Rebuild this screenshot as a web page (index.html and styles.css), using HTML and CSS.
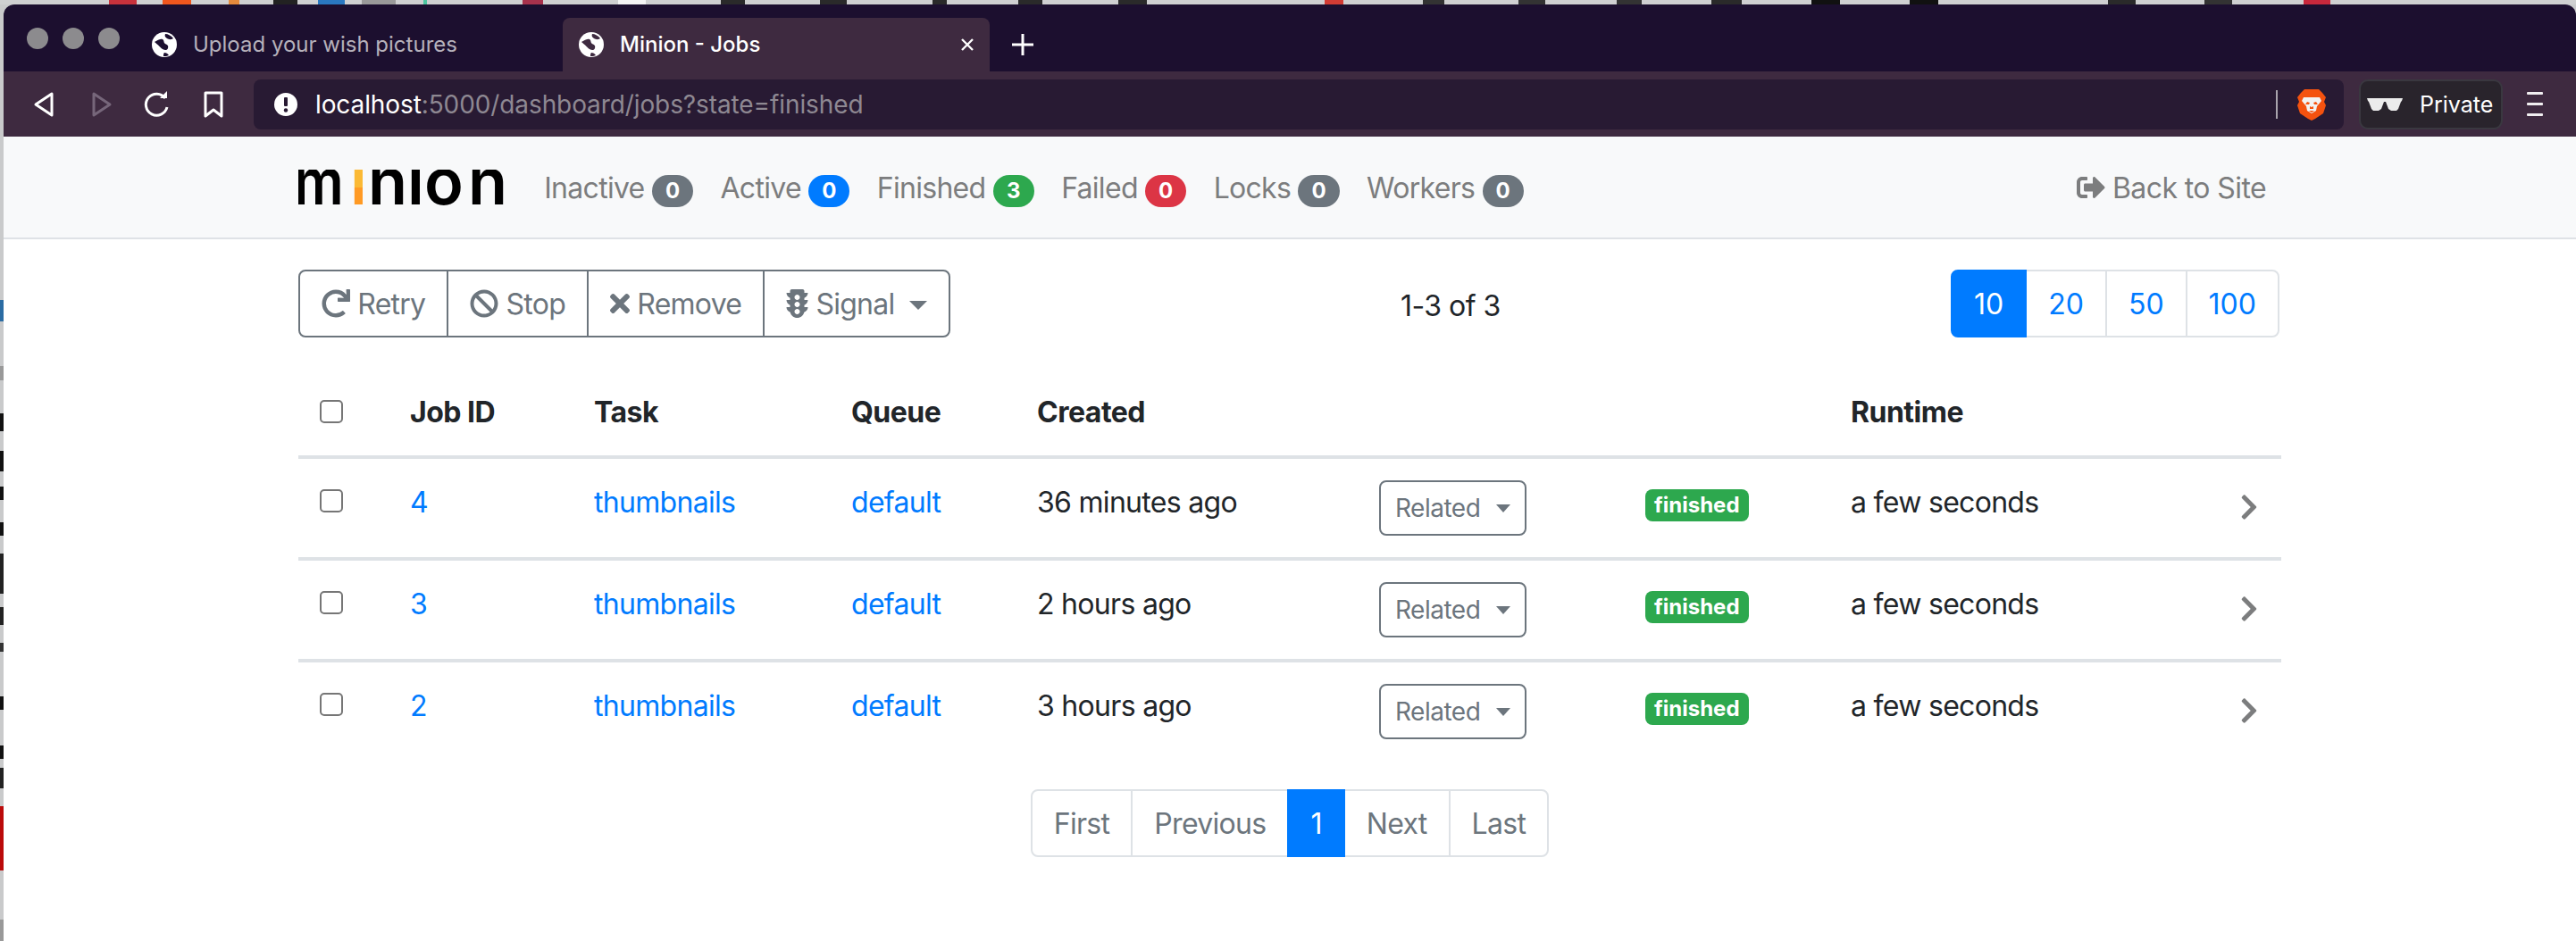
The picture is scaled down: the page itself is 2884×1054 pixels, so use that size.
FILE: index.html
```html
<!DOCTYPE html>
<html lang="en">
<head>
  <meta charset="UTF-8">
  <title>Minion - Jobs</title>
  <link rel="stylesheet" href="styles.css">
</head>
<body>
  <div class="desk-top"></div>
  <div class="screen">
    <div class="desk-left"></div>
    <div class="window">
      <!-- browser tabs -->
      <div class="tabstrip">
        <div class="lights"><i></i><i></i><i></i></div>
        <div class="tab">
          <svg class="globe" viewBox="0 0 28 28"><circle cx="14" cy="14" r="14" fill="#fff"/><path d="M3 11c3-1 5-4 9-3 2 1 1 4 3 5s4 2 3 5-4 2-6 1-5-5-9-8zM15 2c3 0 7 2 9 5-3 2-5 1-7 0s-3-3-2-5zM14 23c2 0 4 1 5 3-2 1-4 1-6 1 0-2 0-3 1-4z" fill="#1c0f2f"/></svg>
          <span>Upload your wish pictures</span>
        </div>
        <div class="tab active">
          <svg class="globe" viewBox="0 0 28 28"><circle cx="14" cy="14" r="14" fill="#fff"/><path d="M3 11c3-1 5-4 9-3 2 1 1 4 3 5s4 2 3 5-4 2-6 1-5-5-9-8zM15 2c3 0 7 2 9 5-3 2-5 1-7 0s-3-3-2-5zM14 23c2 0 4 1 5 3-2 1-4 1-6 1 0-2 0-3 1-4z" fill="#3e2a40"/></svg>
          <span>Minion - Jobs</span>
          <svg class="tab-close" viewBox="0 0 16 16"><path d="M2 2l12 12M14 2L2 14" stroke="#fff" stroke-width="2.4"/></svg>
        </div>
        <svg class="tab-new" viewBox="0 0 24 24"><path d="M12 0v24M0 12h24" stroke="#fff" stroke-width="3"/></svg>
      </div>

      <!-- browser toolbar -->
      <div class="toolbar">
        <svg class="tool" viewBox="0 0 32 32"><path d="M6 16L24 4v24z" fill="none" stroke="#fff" stroke-width="3" stroke-linejoin="round"/></svg>
        <svg class="tool" viewBox="0 0 32 32"><path d="M26 16L8 4v24z" fill="none" stroke="#76667a" stroke-width="3" stroke-linejoin="round"/></svg>
        <svg class="tool" viewBox="0 0 32 32"><path d="M25 9a12 12 0 1 0 2 10" fill="none" stroke="#fff" stroke-width="3"/><path d="M19 9h8V1z" fill="#fff"/></svg>
        <svg class="tool" viewBox="0 0 32 32"><path d="M7 3h18v26l-9-7-9 7z" fill="none" stroke="#fff" stroke-width="3" stroke-linejoin="round"/></svg>
        <div class="urlbar">
          <svg class="url-info" viewBox="0 0 26 26"><circle cx="13" cy="13" r="13" fill="#fff"/><rect x="11" y="5" width="4" height="10" rx="1" fill="#281a33"/><circle cx="13" cy="19.5" r="2.2" fill="#281a33"/></svg>
          <div class="url-text">localhost<span>:5000/dashboard/jobs?state=finished</span></div>
          <div class="url-sep"></div>
          <svg class="lion" viewBox="0 0 32 36"><path d="M8 1h16l4 4 4 5-2 5 2 4-3 9-9 6-4 2-4-2-9-6-3-9 2-4-2-5 4-5z" fill="#f4520f"/><path d="M7 10h18l2 4-5 6-1 5-5 3-5-3-1-5-5-6z" fill="#f2f2f2"/><path d="M13 18h-4l2-3 3 1zM19 18h4l-2-3-3 1zM13 25h6l-3 2zM14 20v3h4v-3l-2 1z" fill="#f4520f"/></svg>
        </div>
        <div class="private">
          <svg class="shades" viewBox="0 0 40 14"><path d="M0 0h40l-1 3-1 1-3 8-2 2h-6l-3-2-3-8h-2l-3 8-3 2H7l-2-2-3-8-1-1z" fill="#ececec"/></svg>
          <span>Private</span>
        </div>
        <div class="burger"><i></i><i></i><i></i></div>
      </div>

      <nav class="navbar">
        <div class="container nav-row">
          <svg class="logo" viewBox="0 0 232 48">
            <defs>
              <clipPath id="logo-clip"><rect x="0" y="4" width="232" height="40"/></clipPath>
              <linearGradient id="logo-i" gradientUnits="userSpaceOnUse" x1="0" y1="4" x2="0" y2="44">
                <stop offset=".5" stop-color="#fbb934"/><stop offset=".5" stop-color="#ff9a24"/>
              </linearGradient>
            </defs>
            <g clip-path="url(#logo-clip)" class="logo-text">
              <text transform="translate(-5 43) scale(.86 1)">m</text>
              <text y="43" x="58 78 122 141 190"><tspan fill="url(#logo-i)">i</tspan>nion</text>
            </g>
          </svg>
          <a class="nav-link">Inactive <span class="badge grey">0</span></a>
          <a class="nav-link">Active <span class="badge blue">0</span></a>
          <a class="nav-link">Finished <span class="badge green">3</span></a>
          <a class="nav-link">Failed <span class="badge red">0</span></a>
          <a class="nav-link">Locks <span class="badge grey">0</span></a>
          <a class="nav-link">Workers <span class="badge grey">0</span></a>
          <a class="nav-link back">
            <svg class="ico" viewBox="0 0 512 512"><path d="M497 273L329 441c-15 15-41 4.500-41-17v-96H152c-13.300 0-24-10.700-24-24v-96c0-13.300 10.700-24 24-24h136V88c0-21.400 25.900-32 41-17l168 168c9.300 9.400 9.300 24.600 0 34zM192 436v-40c0-6.600-5.400-12-12-12H96c-17.700 0-32-14.300-32-32V160c0-17.700 14.300-32 32-32h84c6.600 0 12-5.400 12-12V76c0-6.600-5.400-12-12-12H96c-53 0-96 43-96 96v192c0 53 43 96 96 96h84c6.600 0 12-5.400 12-12z"/></svg>
            Back to Site
          </a>
        </div>
      </nav>

      <main class="container">
        <div class="actions">
          <div class="btn-group">
            <button class="btn">
              <svg class="ico" viewBox="0 0 512 512"><path d="M500.330 0h-47.410a12 12 0 0 0-12 12.570l4 82.760A247.420 247.420 0 0 0 256 8C119.340 8 8.900 119.530 8 256.190 7.100 393.070 118.100 504 256 504a247.100 247.100 0 0 0 166.180-63.910 12 12 0 0 0 .48-17.430l-34-34a12 12 0 0 0-16.380-.55A176 176 0 1 1 402.100 157.800l-101.530-4.870a12 12 0 0 0-12.570 12v47.410a12 12 0 0 0 12 12h200.330a12 12 0 0 0 12-12V12a12 12 0 0 0-12-12z"/></svg>
              Retry
            </button>
            <button class="btn">
              <svg class="ico" viewBox="0 0 512 512"><path d="M256 8C119.034 8 8 119.033 8 256s111.034 248 248 248 248-111.034 248-248S392.967 8 256 8zm130.108 117.892c65.448 65.448 70 165.481 20.677 235.637L150.470 105.216c70.204-49.356 170.226-44.735 235.638 20.676zM125.892 386.108c-65.448-65.448-70-165.481-20.677-235.637L361.530 406.784c-70.203 49.356-170.226 44.736-235.638-20.676z"/></svg>
              Stop
            </button>
            <button class="btn">
              <svg class="ico ico-x" viewBox="0 0 352 512"><path d="M242.720 256l100.070-100.070c12.280-12.280 12.280-32.190 0-44.480l-22.240-22.240c-12.280-12.280-32.190-12.280-44.480 0L176 189.280 75.930 89.210c-12.280-12.280-32.190-12.280-44.480 0L9.210 111.450c-12.280 12.280-12.280 32.190 0 44.480L109.280 256 9.210 356.070c-12.280 12.280-12.280 32.190 0 44.480l22.240 22.240c12.280 12.280 32.200 12.280 44.480 0L176 322.720l100.070 100.070c12.280 12.280 32.200 12.280 44.480 0l22.240-22.240c12.280-12.280 12.280-32.190 0-44.480L242.720 256z"/></svg>
              Remove
            </button>
            <button class="btn">
              <svg class="ico ico-light" viewBox="0 0 384 512"><path d="M384 192h-64v-37.880c37.200-13.220 64-48.380 64-90.120h-64V32c0-17.670-14.330-32-32-32H96C78.330 0 64 14.330 64 32v32H0c0 41.740 26.800 76.900 64 90.120V192H0c0 41.740 26.800 76.900 64 90.120V320H0c0 42.840 28.250 78.690 66.990 91.050C79.420 468.720 130.600 512 192 512s112.580-43.280 125.010-100.950C355.750 398.690 384 362.840 384 320h-64v-37.880c37.200-13.220 64-48.380 64-90.120zM192 448c-26.510 0-48-21.490-48-48s21.490-48 48-48 48 21.490 48 48-21.490 48-48 48zm0-128c-26.510 0-48-21.490-48-48s21.490-48 48-48 48 21.490 48 48-21.490 48-48 48zm0-128c-26.510 0-48-21.490-48-48 0-26.510 21.490-48 48-48s48 21.490 48 48c0 26.510-21.490 48-48 48z"/></svg>
              Signal <span class="caret"></span>
            </button>
          </div>
          <div class="count">1-3 of 3</div>
          <div class="pager page-sizes">
            <a class="page on">10</a>
            <a class="page link">20</a>
            <a class="page link">50</a>
            <a class="page link">100</a>
          </div>
        </div>

        <table class="jobs">
          <colgroup>
            <col class="c-check"><col class="c-id"><col class="c-task"><col class="c-queue">
            <col class="c-created"><col class="c-related"><col class="c-state"><col class="c-runtime"><col class="c-more">
          </colgroup>
          <thead>
            <tr>
              <th><input type="checkbox" class="check"></th>
              <th>Job ID</th>
              <th>Task</th>
              <th>Queue</th>
              <th>Created</th>
              <th></th>
              <th></th>
              <th>Runtime</th>
              <th></th>
            </tr>
          </thead>
          <tbody>
            <tr>
              <td><input type="checkbox" class="check"></td>
              <td><a>4</a></td>
              <td><a>thumbnails</a></td>
              <td><a>default</a></td>
              <td>36 minutes ago</td>
              <td><button class="btn btn-sm">Related <span class="caret"></span></button></td>
              <td><span class="state">finished</span></td>
              <td>a few seconds</td>
              <td class="more"><svg class="chevron" viewBox="0 0 320 512"><path d="M285.476 272.971L91.132 467.314c-9.373 9.373-24.569 9.373-33.941 0l-22.667-22.667c-9.357-9.357-9.375-24.522-.04-33.901L188.505 256 34.484 101.255c-9.335-9.379-9.317-24.544.04-33.901l22.667-22.667c9.373-9.373 24.569-9.373 33.941 0L285.475 239.030c9.373 9.372 9.373 24.568.001 33.941z"/></svg></td>
            </tr>
            <tr>
              <td><input type="checkbox" class="check"></td>
              <td><a>3</a></td>
              <td><a>thumbnails</a></td>
              <td><a>default</a></td>
              <td>2 hours ago</td>
              <td><button class="btn btn-sm">Related <span class="caret"></span></button></td>
              <td><span class="state">finished</span></td>
              <td>a few seconds</td>
              <td class="more"><svg class="chevron" viewBox="0 0 320 512"><path d="M285.476 272.971L91.132 467.314c-9.373 9.373-24.569 9.373-33.941 0l-22.667-22.667c-9.357-9.357-9.375-24.522-.04-33.901L188.505 256 34.484 101.255c-9.335-9.379-9.317-24.544.04-33.901l22.667-22.667c9.373-9.373 24.569-9.373 33.941 0L285.475 239.030c9.373 9.372 9.373 24.568.001 33.941z"/></svg></td>
            </tr>
            <tr>
              <td><input type="checkbox" class="check"></td>
              <td><a>2</a></td>
              <td><a>thumbnails</a></td>
              <td><a>default</a></td>
              <td>3 hours ago</td>
              <td><button class="btn btn-sm">Related <span class="caret"></span></button></td>
              <td><span class="state">finished</span></td>
              <td>a few seconds</td>
              <td class="more"><svg class="chevron" viewBox="0 0 320 512"><path d="M285.476 272.971L91.132 467.314c-9.373 9.373-24.569 9.373-33.941 0l-22.667-22.667c-9.357-9.357-9.375-24.522-.04-33.901L188.505 256 34.484 101.255c-9.335-9.379-9.317-24.544.04-33.901l22.667-22.667c9.373-9.373 24.569-9.373 33.941 0L285.475 239.030c9.373 9.372 9.373 24.568.001 33.941z"/></svg></td>
            </tr>
          </tbody>
        </table>

        <div class="pagination">
          <div class="pager">
            <a class="page">First</a>
            <a class="page">Previous</a>
            <a class="page on">1</a>
            <a class="page">Next</a>
            <a class="page">Last</a>
          </div>
        </div>
      </main>
    </div>
  </div>
</body>
</html>
```

FILE: styles.css
```css
* {
  box-sizing: border-box;
}
html, body {
  height: 100%;
}
body {
  margin: 0;
  display: flex;
  flex-direction: column;
  overflow: hidden;
  background: #c9cacb;
  color: #212529;
  font-family: Inter, "Liberation Sans", sans-serif;
  font-size: 32px;
  line-height: 48px;
  letter-spacing: -0.5px;
}

/* bits of the desktop showing behind the window */
.desk-top {
  height: 5px;
  flex: none;
  background:
    linear-gradient(90deg,
      #cfd0d1 122px, #c8323c 122px, #c8323c 153px, #cfd0d1 153px,
      #cfd0d1 182px, #f0561d 182px, #f0561d 214px, #cfd0d1 214px,
      #cfd0d1 256px, #e58a3c 256px, #e58a3c 268px, #cfd0d1 268px,
      #cfd0d1 306px, #222 306px, #222 333px, #cfd0d1 333px,
      #cfd0d1 356px, #2a78c0 356px, #2a78c0 386px, #cfd0d1 386px,
      #cfd0d1 405px, #999 405px, #999 443px, #cfd0d1 443px,
      #cfd0d1 474px, #4cc6a0 474px, #4cc6a0 478px, #cfd0d1 478px,
      #cfd0d1 585px, #a8324c 585px, #a8324c 608px, #cfd0d1 608px,
      #cfd0d1 692px, #f4f4f4 692px, #f4f4f4 723px, #cfd0d1 723px,
      #cfd0d1 807px, #2a2a2a 807px, #2a2a2a 834px, #cfd0d1 834px,
      #cfd0d1 918px, #2a2a2a 918px, #2a2a2a 948px, #cfd0d1 948px,
      #cfd0d1 1044px, #2a2a2a 1044px, #2a2a2a 1060px, #cfd0d1 1060px,
      #cfd0d1 1140px, #2a2a2a 1140px, #2a2a2a 1167px, #cfd0d1 1167px,
      #cfd0d1 1252px, #2a2a2a 1252px, #2a2a2a 1284px, #cfd0d1 1284px,
      #cfd0d1 1483px, #d23c34 1483px, #d23c34 1504px, #cfd0d1 1504px,
      #cfd0d1 1593px, #333 1593px, #333 1617px, #cfd0d1 1617px,
      #cfd0d1 1700px, #333 1700px, #333 1730px, #cfd0d1 1730px,
      #cfd0d1 1810px, #333 1810px, #333 1838px, #cfd0d1 1838px,
      #cfd0d1 1916px, #2a2a2a 1916px, #2a2a2a 1950px, #cfd0d1 1950px,
      #cfd0d1 2028px, #111 2028px, #111 2060px, #cfd0d1 2060px,
      #cfd0d1 2138px, #111 2138px, #111 2170px, #cfd0d1 2170px,
      #cfd0d1 2360px, #2a2a2a 2360px, #2a2a2a 2391px, #cfd0d1 2391px,
      #cfd0d1 2468px, #333 2468px, #333 2499px, #cfd0d1 2499px,
      #cfd0d1 2579px, #c8283c 2579px, #c8283c 2609px, #cfd0d1 2609px);
}
.screen {
  flex: 1;
  display: flex;
  min-height: 0;
}
.desk-left {
  width: 4px;
  flex: none;
  background:
    linear-gradient(180deg,
      #c9cacb 331px, #2b6ca3 331px, #2b6ca3 355px, #c9cacb 355px,
      #c9cacb 405px, #999 405px, #999 421px, #c9cacb 421px,
      #c9cacb 458px, #111 458px, #111 478px, #c9cacb 478px,
      #c9cacb 500px, #111 500px, #111 523px, #c9cacb 523px,
      #c9cacb 540px, #111 540px, #111 555px, #c9cacb 555px,
      #c9cacb 580px, #111 580px, #111 595px, #c9cacb 595px,
      #c9cacb 615px, #222 615px, #222 660px, #c9cacb 660px,
      #c9cacb 675px, #222 675px, #222 695px, #c9cacb 695px,
      #c9cacb 715px, #333 715px, #333 725px, #c9cacb 725px,
      #c9cacb 775px, #111 775px, #111 790px, #c9cacb 790px,
      #c9cacb 830px, #111 830px, #111 845px, #c9cacb 845px,
      #c9cacb 855px, #222 855px, #222 878px, #c9cacb 878px,
      #c9cacb 898px, #bb0a0a 898px, #bb0a0a 970px, #c9cacb 970px,
      #c9cacb 1025px, #999 1025px, #999 1049px);
}
.window {
  flex: 1;
  min-width: 0;
  background: #fff;
  border-radius: 12px 12px 0 0;
  overflow: hidden;
}

/* tabs */
.tabstrip {
  height: 75px;
  display: flex;
  align-items: flex-end;
  background: #1c0f2f;
  padding-left: 26px;
}
.lights {
  display: flex;
  gap: 16px;
  align-self: center;
  margin-right: 18px;
}
.lights i {
  width: 24px;
  height: 24px;
  border-radius: 50%;
  background: #8c8b8e;
}
.tab {
  width: 478px;
  height: 60px;
  display: flex;
  align-items: center;
  gap: 18px;
  padding-left: 18px;
  border-radius: 8px 8px 0 0;
  color: #b6b1bb;
  font-size: 24px;
  line-height: 30px;
  letter-spacing: 0;
}
.tab.active {
  background: #3e2a40;
  color: #fff;
  font-weight: 500;
}
.globe {
  width: 28px;
  height: 28px;
  flex: none;
}
.tab-close {
  width: 16px;
  height: 16px;
  margin-left: auto;
  margin-right: 17px;
}
.tab-new {
  width: 24px;
  height: 24px;
  margin: 0 0 18px 25px;
}

/* toolbar */
.toolbar {
  height: 73px;
  display: flex;
  align-items: center;
  background: #3e2a40;
  padding-left: 30px;
}
.tool {
  width: 32px;
  height: 32px;
  margin-right: 31px;
  flex: none;
}
.urlbar {
  width: 2340px;
  height: 56px;
  margin-left: -2px;
  display: flex;
  align-items: center;
  background: #281a33;
  border-radius: 8px;
  padding: 0 20px 0 23px;
}
.url-info {
  width: 26px;
  height: 26px;
  margin-right: 20px;
}
.url-text {
  color: #fff;
  font-size: 28px;
  line-height: 34px;
  letter-spacing: -0.1px;
}
.url-text span {
  color: #8e8892;
}
.url-sep {
  width: 2px;
  height: 32px;
  margin-left: auto;
  margin-right: 22px;
  background: #a9a4ad;
}
.lion {
  width: 32px;
  height: 36px;
}
.private {
  width: 161px;
  height: 56px;
  margin-left: 17px;
  display: flex;
  align-items: center;
  gap: 19px;
  padding-left: 7px;
  background: #29242c;
  border: 2px solid #3a3840;
  border-radius: 10px;
  color: #fff;
  font-size: 25px;
  line-height: 30px;
  letter-spacing: 0;
}
.shades {
  width: 40px;
  height: 14px;
}
.burger {
  width: 18px;
  margin-left: 27px;
  display: flex;
  flex-direction: column;
  gap: 9px;
}
.burger i {
  height: 3px;
  background: #f0eef0;
  border-radius: 1px;
}

/* page navbar */
.container {
  width: 2220px;
  margin: 0 auto;
}
.navbar {
  height: 115px;
  background: #f8f9fa;
  border-bottom: 2px solid #dfe2e6;
}
.nav-row {
  height: 113px;
  display: flex;
  align-items: center;
}
.logo {
  width: 232px;
  height: 48px;
  margin-right: 28px;
  flex: none;
}
.logo-text text {
  font-family: Inter, "Liberation Sans", sans-serif;
  font-size: 72px;
  font-weight: 600;
  letter-spacing: 0;
  fill: #000;
}
.nav-link {
  padding: 3px 15.2px 0;
  color: #7c7d7e;
  letter-spacing: -0.7px;
  white-space: nowrap;
}
.nav-link.back {
  margin-left: auto;
  padding-right: 17px;
  letter-spacing: -0.6px;
}
.badge {
  display: inline-block;
  min-width: 46px;
  height: 36px;
  padding: 0 15px;
  border-radius: 20px;
  color: #fff;
  font-size: 24px;
  font-weight: 700;
  line-height: 36px;
  letter-spacing: 0;
  text-align: center;
  vertical-align: 0;
}
.grey { background: #6c757d; }
.blue { background: #007bff; }
.green { background: #2da84e; }
.red { background: #dc3545; }

.ico {
  width: 32px;
  height: 32px;
  fill: currentColor;
  vertical-align: -4px;
}
.ico-x {
  width: 22px;
}
.ico-light {
  width: 25px;
}

/* action row */
.actions {
  display: flex;
  justify-content: space-between;
  align-items: center;
  margin-top: 34px;
}
.btn-group {
  display: flex;
}
.btn {
  height: 76px;
  padding: 2px 24px 0;
  background: #fff;
  border: 2px solid #6c757d;
  border-radius: 8px;
  color: #6c757d;
  font: inherit;
  letter-spacing: -0.75px;
  white-space: nowrap;
}
.btn-group .btn {
  border-radius: 0;
  margin-left: -2px;
}
.btn-group .btn:first-child {
  margin-left: 0;
  border-radius: 8px 0 0 8px;
}
.btn-group .btn:last-child {
  border-radius: 0 8px 8px 0;
}
.btn-sm {
  height: 62px;
  padding: 0 16px;
  font-size: 28px;
  line-height: 42px;
  letter-spacing: -0.5px;
  display: block;
}
.caret {
  display: inline-block;
  margin-left: 8px;
  vertical-align: 5px;
  border-top: 10px solid #6c757d;
  border-left: 10px solid transparent;
  border-right: 10px solid transparent;
}
.btn-sm .caret {
  margin-left: 10px;
  border-top-width: 9px;
  border-left-width: 8px;
  border-right-width: 8px;
}
.count {
  margin-top: 6px;
}

/* pagers */
.pager {
  display: flex;
  letter-spacing: -0.7px;
}
.page-sizes {
  margin-right: 2px;
  letter-spacing: 0;
}
.page {
  height: 76px;
  padding: 13px 24px 11px;
  margin-left: -2px;
  border: 2px solid #dee2e6;
  color: #6c757d;
}
.page:first-child {
  margin-left: 0;
  border-radius: 8px 0 0 8px;
}
.page:last-child {
  border-radius: 0 8px 8px 0;
}
.page.link {
  color: #007bff;
}
.page.on {
  background: #007bff;
  border-color: #007bff;
  color: #fff;
  position: relative;
}
.pagination {
  display: flex;
  justify-content: center;
  margin-top: 32px;
}

/* jobs table */
.jobs {
  width: 100%;
  margin-top: 36px;
  table-layout: fixed;
  border-collapse: separate;
  border-spacing: 0;
}
.c-check { width: 101px; }
.c-id { width: 206px; }
.c-task { width: 288px; }
.c-queue { width: 208px; }
.c-created { width: 383px; }
.c-related { width: 298px; }
.c-state { width: 230px; }
.c-runtime { width: 418px; }
.jobs th {
  padding: 24px;
  text-align: left;
  vertical-align: top;
  font-weight: 700;
  border-bottom: 4px solid #dee2e6;
}
.jobs td {
  padding: 24px;
  vertical-align: top;
  line-height: 50px;
  letter-spacing: -0.7px;
  border-bottom: 4px solid #dee2e6;
}
.jobs tbody tr:last-child td {
  border-bottom: none;
}
.jobs a {
  color: #007bff;
}
.check {
  appearance: none;
  display: block;
  width: 26px;
  height: 26px;
  margin: 10px 0 0;
  background: #fff;
  border: 2px solid #767676;
  border-radius: 5px;
}
.state {
  display: inline-block;
  height: 36px;
  margin-top: 10px;
  padding: 0 10px;
  background: #2da84e;
  border-radius: 8px;
  color: #fff;
  font-size: 24px;
  font-weight: 700;
  line-height: 36px;
  letter-spacing: 0;
  vertical-align: top;
}
.more {
  text-align: right;
}
.chevron {
  width: 20px;
  height: 32px;
  margin: 14px 2px 0 0;
  fill: #7c7d7e;
}
```
